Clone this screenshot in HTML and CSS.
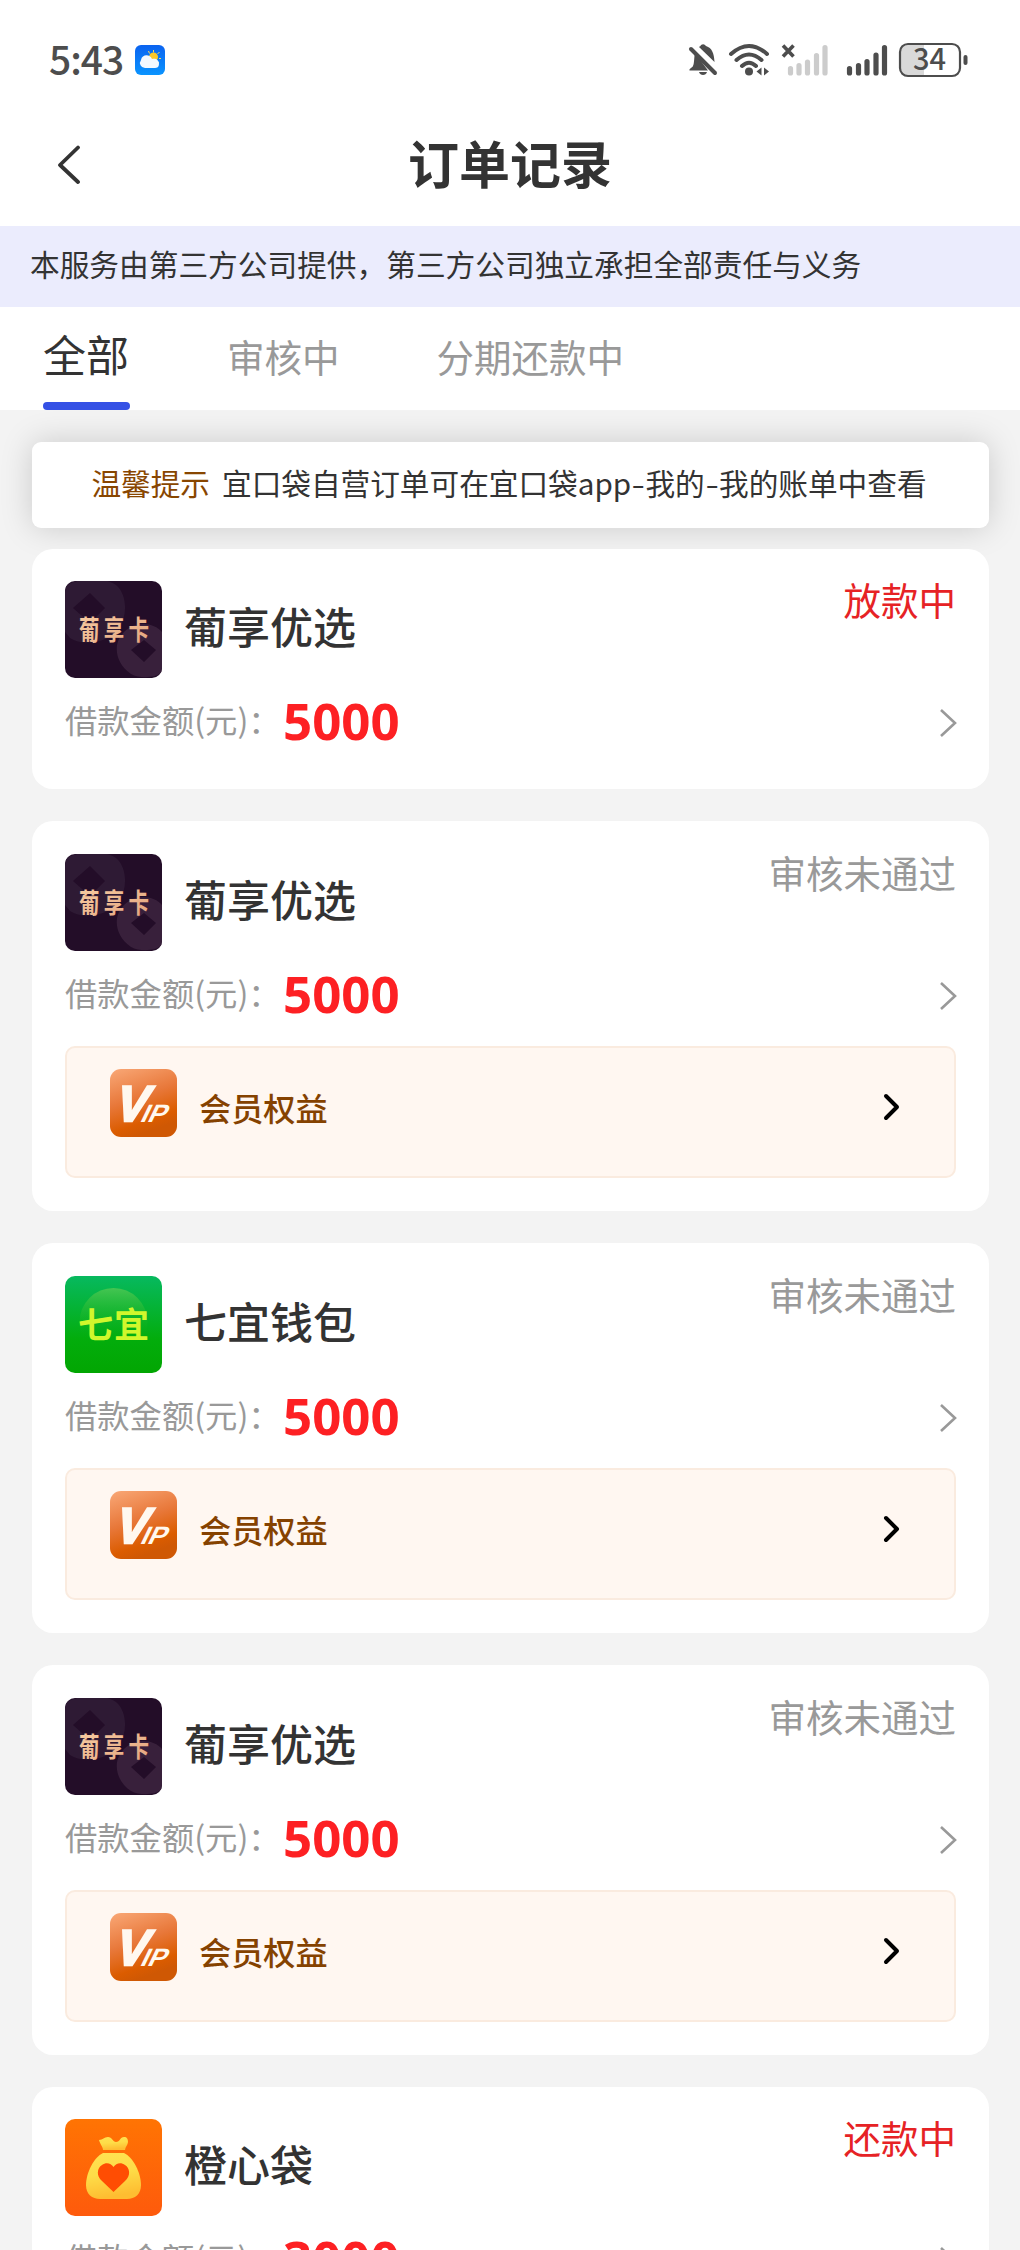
FILE: index.html
```html
<!DOCTYPE html>
<html lang="zh-CN">
<head>
<meta charset="utf-8">
<title>订单记录</title>
<link rel="stylesheet" href="styles.css">
</head>
<body>
<svg class="defs" width="0" height="0">
  <defs>
    <linearGradient id="g-vip" x1="0" y1="0" x2=".35" y2="1"><stop offset="0" stop-color="#f9a877"/><stop offset=".5" stop-color="#e8783a"/><stop offset=".85" stop-color="#db5c00"/><stop offset="1" stop-color="#cf5804"/></linearGradient>
    <linearGradient id="g-green" x1="0" y1="0" x2="0" y2="1"><stop offset="0" stop-color="#07b95f"/><stop offset=".65" stop-color="#03ad0c"/><stop offset="1" stop-color="#02a602"/></linearGradient>
    <linearGradient id="g-disc" x1="0" y1="0" x2="0" y2="1"><stop offset="0" stop-color="#45c552"/><stop offset=".75" stop-color="#04ad0c" stop-opacity="0"/></linearGradient>
    <linearGradient id="g-orange" x1="0" y1="0" x2="0" y2="1"><stop offset="0" stop-color="#ff7403"/><stop offset="1" stop-color="#fe5a0c"/></linearGradient>
    <linearGradient id="g-bag" x1="0" y1="0" x2=".2" y2="1"><stop offset="0" stop-color="#ffe252"/><stop offset=".5" stop-color="#fedd48"/><stop offset="1" stop-color="#febd31"/></linearGradient>
    <linearGradient id="g-gold" x1="0" y1="0" x2="1" y2="1"><stop offset="0" stop-color="#f9cfa4"/><stop offset="1" stop-color="#e2a27d"/></linearGradient>
    <linearGradient id="g-sky" x1="0" y1="0" x2="0" y2="1"><stop offset="0" stop-color="#0b63f0"/><stop offset="1" stop-color="#0a94ff"/></linearGradient>
    <symbol id="logo-puxiang" viewBox="0 0 97 97">
      <rect width="97" height="97" fill="#230d28"/>
      <path fill="#2e1a34" fill-rule="evenodd" d="M0 5C15-4 40-4 51 4C62 13 63 34 54 48C45 61 18 66 5 57L0 51ZM25 12L8 27L25 42L40 27Z"/>
      <path fill="#38203b" fill-rule="evenodd" d="M78 43C86 43 93 46 97 51V91C91 97 75 98 66 93C52 84 49 68 54 58C60 47 69 43 78 43ZM79 59L66 69L79 81L91 69Z"/>
      <text class="logo-text" transform="translate(14 59) scale(1 1.35)" font-size="20.500" textLength="70" fill="url(#g-gold)">葡享卡</text>
    </symbol>
    <symbol id="logo-qiyi" viewBox="0 0 97 97">
      <rect width="97" height="97" fill="url(#g-green)"/>
      <circle cx="48.500" cy="46" r="34" fill="url(#g-disc)"/>
      <text class="logo-text" x="13" y="62" font-size="35" textLength="71" fill="#d0f72c">七宜</text>
    </symbol>
    <symbol id="logo-bag" viewBox="0 0 97 97">
      <rect width="97" height="97" fill="url(#g-orange)"/>
      <path fill="url(#g-bag)" d="M34 21C38 21 39 18 43 18C47 18 48 23 51 23C55 23 55 18 59 18C62 18 63 20 63 23C63 26 60 28 60 31H38C38 28 35 25 34 21Z"/>
      <path fill="url(#g-bag)" d="M38 34H59C68 38 76 54 76 66C76 75 70 80 62 80H35C27 80 21 75 21 66C21 54 29 38 38 34Z"/>
      <path fill="#ff4d03" d="M48.500 73L37 62C31 57 32 49 37 46C41 43 46 44 48.500 48C51 44 56 43 60 46C65 49 66 57 60 62Z"/>
    </symbol>
    <symbol id="vip" viewBox="0 0 67 68">
      <rect width="67" height="68" rx="11" fill="url(#g-vip)"/>
      <g fill="#fff8ef" class="vip-text">
        <text transform="translate(2.500 51.500) skewX(-17)" font-size="50" textLength="32" lengthAdjust="spacingAndGlyphs" stroke="#fff8ef" stroke-width="2.500">V</text>
        <text transform="translate(29 52.500) skewX(-26)" font-size="25" textLength="25" lengthAdjust="spacingAndGlyphs">IP</text>
      </g>
    </symbol>
    <symbol id="chev" viewBox="0 0 18 30"><path d="M2 2L16 15L2 28" fill="none" stroke="#999" stroke-width="2.600"/></symbol>
    <symbol id="chev-bold" viewBox="0 0 17 28"><path d="M3 3L14 14L3 25" fill="none" stroke="#000" stroke-width="4" stroke-linecap="round" stroke-linejoin="round"/></symbol>
  </defs>
</svg>

<div class="statusbar">
  <span class="clock">5:43</span>
  <svg class="weather" width="30" height="30" viewBox="0 0 30 30">
    <rect width="30" height="30" rx="6" fill="url(#g-sky)"/>
    <g stroke="#ffd75a" stroke-width="1"><path d="M18.500 5V7.500M13.500 6L14.500 8.500M24.500 7L22.500 9M26 13.500H24M24 18L22.500 16.500"/></g>
    <circle cx="18.500" cy="12" r="4.500" fill="#ffc928"/>
    <path fill="#f4f9ff" d="M10 23A5 5 0 0 1 6 15C7 9 15 9 17 14C21 13 24 15 24 19C24 22 22 23 20 23Z"/>
  </svg>
  <svg class="indicators" width="282" height="38" viewBox="0 0 282 38">
    <g fill="#4d4d4d" stroke="none">
      <path d="M8 12C7 15 7.500 22 6 25C5 27 2 27.500 2.500 29.500H21L8 12Z"/>
      <path d="M12 6C13 5.500 13.500 5 14 4Q17 2 19 5C25 7 27 12 27.500 21Z"/>
      <path d="M12 31H20C19 35 13 35 12 31Z"/>
      <circle cx="62" cy="30.500" r="4"/>
      <path d="M74.500 26.500V34.500L69.500 30.500ZM77 26.500V34.500L82 30.500Z"/>
    </g>
    <g fill="none" stroke="#4d4d4d" stroke-linecap="round">
      <path stroke-width="4" d="M4 8L28 32"/>
      <path stroke-width="4" d="M44 13Q62-3 80 13M49.500 19Q62 8 74.500 19M55 25Q62 18.500 69 25"/>
      <path stroke-width="3.600" stroke-linecap="butt" d="M96 4.500L106.500 15.500M106.500 4.500L96 15.500"/>
      <path stroke-width="5.200" stroke="#ccc" d="M103.500 27.500V32M112 24.500V32M120.500 21V32M129.500 14.500V32M138 6.500V32"/>
      <path stroke-width="5.200" d="M162.500 27.500V32M171.500 24.500V32M180 20.500V32M189 14V32M197.500 6.500V32"/>
    </g>
    <path fill="#d9d9d9" d="M222 4H237V35H222Q214 35 214 27V12Q214 4 222 4Z"/>
    <rect x="213" y="3" width="60" height="32" rx="8" fill="none" stroke="#4d4d4d" stroke-width="2.200"/>
    <rect x="276.500" y="14" width="4" height="10" rx="2" fill="#4d4d4d"/>
    <text class="battery" x="226" y="29" textLength="33">34</text>
  </svg>
</div>

<header class="navbar">
  <svg class="back" width="24" height="40" viewBox="0 0 24 40"><path d="M21 2.500L3 20L21 37" fill="none" stroke="#333" stroke-width="3.800" stroke-linecap="round" stroke-linejoin="round"/></svg>
  <h1>订单记录</h1>
</header>

<div class="notice">本服务由第三方公司提供&#xFF0C;第三方公司独立承担全部责任与义务</div>

<nav class="tabs">
  <a class="tab tab-active">全部</a>
  <a class="tab">审核中</a>
  <a class="tab">分期还款中</a>
</nav>

<main>
  <div class="tip"><b>温馨提示</b><span>宜口袋自营订单可在宜口袋app<i>-</i>我的<i>-</i>我的账单中查看</span></div>

  <section class="card card-plain">
    <div class="head"><svg class="logo"><use href="#logo-puxiang"/></svg><h2>葡享优选</h2><span class="state state-on">放款中</span></div>
    <div class="amount"><span class="label">借款金额(元)&#xFF1A;</span><strong>5000</strong><svg class="chev"><use href="#chev"/></svg></div>
  </section>

  <section class="card">
    <div class="head"><svg class="logo"><use href="#logo-puxiang"/></svg><h2>葡享优选</h2><span class="state">审核未通过</span></div>
    <div class="amount"><span class="label">借款金额(元)&#xFF1A;</span><strong>5000</strong><svg class="chev"><use href="#chev"/></svg></div>
    <div class="member"><svg class="vip"><use href="#vip"/></svg><span>会员权益</span><svg class="go"><use href="#chev-bold"/></svg></div>
  </section>

  <section class="card">
    <div class="head"><svg class="logo"><use href="#logo-qiyi"/></svg><h2>七宜钱包</h2><span class="state">审核未通过</span></div>
    <div class="amount"><span class="label">借款金额(元)&#xFF1A;</span><strong>5000</strong><svg class="chev"><use href="#chev"/></svg></div>
    <div class="member"><svg class="vip"><use href="#vip"/></svg><span>会员权益</span><svg class="go"><use href="#chev-bold"/></svg></div>
  </section>

  <section class="card">
    <div class="head"><svg class="logo"><use href="#logo-puxiang"/></svg><h2>葡享优选</h2><span class="state">审核未通过</span></div>
    <div class="amount"><span class="label">借款金额(元)&#xFF1A;</span><strong>5000</strong><svg class="chev"><use href="#chev"/></svg></div>
    <div class="member"><svg class="vip"><use href="#vip"/></svg><span>会员权益</span><svg class="go"><use href="#chev-bold"/></svg></div>
  </section>

  <section class="card card-plain">
    <div class="head"><svg class="logo"><use href="#logo-bag"/></svg><h2>橙心袋</h2><span class="state state-on">还款中</span></div>
    <div class="amount"><span class="label">借款金额(元)&#xFF1A;</span><strong>3000</strong><svg class="chev"><use href="#chev"/></svg></div>
  </section>
</main>
</body>
</html>
```
FILE: styles.css
```css
* { box-sizing: border-box; }
html { height: 2250px; overflow: hidden; }
body {
  margin: 0;
  width: 1020px;
  height: 2250px;
  overflow: hidden;
  background: #f3f3f3;
  color: #333;
  font-family: "Noto Sans CJK SC", "Noto Sans", sans-serif;
}
h1, h2 { margin: 0; }
svg { display: block; flex: none; }
.defs { position: absolute; }

.statusbar {
  display: flex;
  align-items: center;
  height: 120px;
  padding: 0 51px 0 49px;
  background: #fff;
}
.clock { width: 86px; padding-bottom: 4px; font-size: 39px; font-weight: 500; line-height: 60px; letter-spacing: -1px; color: #4d4d4d; }
.indicators { margin-left: auto; }
.battery { font-size: 29px; font-weight: 500; fill: #4d4d4d; }

.navbar {
  display: grid;
  grid-template-columns: 120px 1fr 120px;
  align-items: start;
  height: 106px;
  background: #fff;
}
.back { margin: 25px 0 0 57px; }
.navbar h1 { text-align: center; font-size: 51px; line-height: 84px; font-weight: 700; }

.notice {
  height: 81px;
  padding-left: 30px;
  background: #ebecfd;
  font-size: 29.7px;
  line-height: 75px;
  white-space: nowrap;
}

.tabs { display: flex; height: 103px; padding-left: 43px; background: #fff; }
.tab { margin-right: 97px; font-size: 37.5px; line-height: 97px; color: #999; white-space: nowrap; }
.tab-active {
  display: flex;
  flex-direction: column;
  justify-content: space-between;
  font-size: 43px;
  line-height: 93px;
  height: 103px;
  color: #333;
}
.tab-active::after { content: ""; width: 87px; height: 8px; border-radius: 4px; background: #3551e5; }

main { padding: 32px 31px 0 32px; }
.tip {
  display: flex;
  justify-content: center;
  height: 86px;
  margin-bottom: 21px;
  padding-right: 3px;
  border-radius: 9px;
  background: #fff;
  box-shadow: 0 0 32px rgba(0, 0, 0, .17);
  font-size: 29.65px;
  line-height: 81px;
  white-space: nowrap;
}
.tip b { margin-right: 12px; font-weight: 400; color: #884600; }
.tip i { display: inline-block; margin: 0 2px; font-style: normal; transform: scaleX(1.3); }

.card {
  height: 390px;
  margin-bottom: 32px;
  padding: 33px 33px 0;
  border-radius: 21px;
  background: #fff;
}
.tip + .card { position: relative; }
.card-plain { height: 240px; padding-top: 32px; }
.head { display: flex; height: 97px; }
.logo { width: 97px; height: 97px; margin-right: 22px; border-radius: 10px; }
.logo-text { font-weight: 700; }
.head h2 { font-size: 43px; line-height: 88px; font-weight: 500; }
.state { margin-left: auto; font-size: 37.5px; line-height: 36px; color: #999; }
.state-on { color: #e62225; }

.amount { display: flex; align-items: center; height: 78px; margin-top: 4px; }
.label { width: 218px; margin-top: -4px; font-size: 32.3px; line-height: 76px; color: #999; white-space: nowrap; }
.amount strong { margin-top: -3px; font-family: "Noto Sans", sans-serif; font-size: 51px; line-height: 78px; color: #fd2023; }
.chev { width: 18px; height: 30px; margin: 3px -1px 0 auto; }

.member {
  display: flex;
  height: 132px;
  margin-top: 13px;
  padding: 21px 54px 0 43px;
  border: 2px solid #faebdf;
  border-radius: 10px;
  background: #fff7f1;
  color: #854200;
}
.vip { width: 67px; height: 68px; margin-right: 22px; }
.vip-text { font-family: "Liberation Sans", sans-serif; font-weight: 700; }
.member span { font-size: 32.2px; font-weight: 500; line-height: 77px; }
.go { width: 17px; height: 28px; margin: 24px 0 0 auto; }
```
